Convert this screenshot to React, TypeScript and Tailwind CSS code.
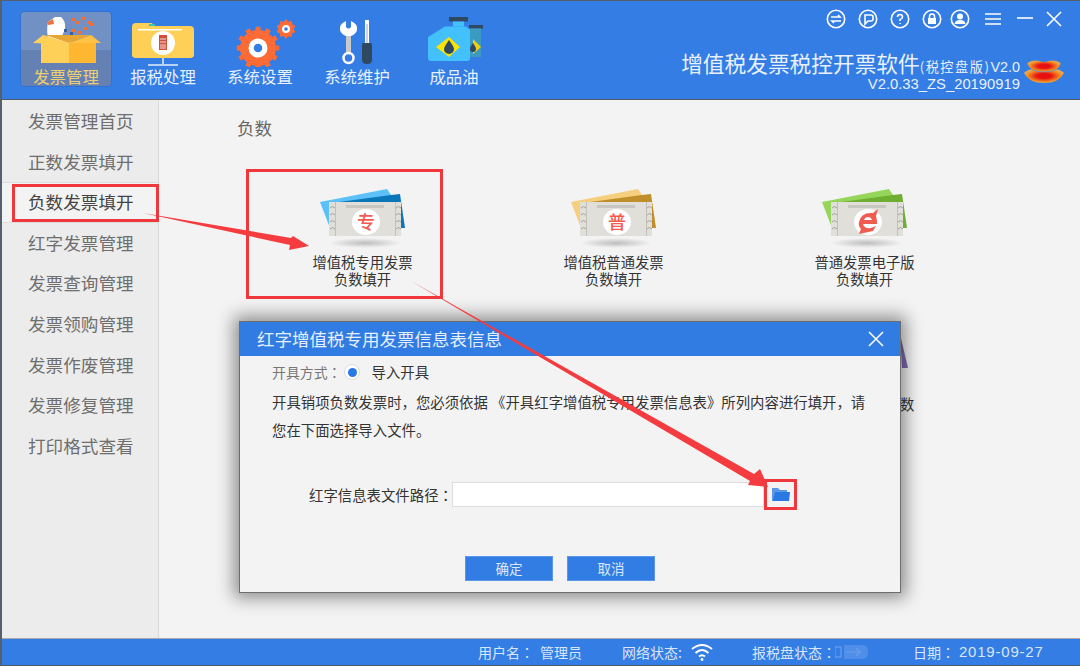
import React from "react";

const cjk = { fontFamily: '"Noto Sans CJK SC", "Liberation Sans", sans-serif' };
const latin = { fontFamily: '"Liberation Sans", sans-serif' };
const Colon = () => <span style={{ fontFamily: '"Noto Sans CJK TC", sans-serif' }}>：</span>;

function BoxIcon() {
  return (
    <svg width="72" height="50" viewBox="0 0 72 50" className="translate-x-[3px]">
      <path d="M15 5 L22 0 H28 Q33 4 32 12 L29 19 H38 L38 26 H16 Q13 14 15 5Z" fill="#fff" />
      <path d="M15 5 L20 2 L21 7 L15 8Z" fill="#f0703c" />
      <g fill="#f0703c">
        <rect x="39" y="1" width="4" height="3" /><rect x="48" y="0" width="4" height="3" />
        <rect x="43" y="4" width="4" height="3" /><rect x="54" y="4" width="4" height="3" />
        <rect x="39" y="12" width="3" height="3" /><rect x="50" y="10" width="4" height="3" />
        <rect x="56" y="6" width="4" height="3" /><rect x="44" y="14" width="4" height="3" />
      </g>
      <g fill="#3d5f95"><rect x="31" y="12" width="3" height="3" /><rect x="37" y="15" width="3" height="3" /></g>
      <path d="M8 26 H36 V46 H8Z" fill="#ffd058" />
      <path d="M36 26 H63 V46 H36Z" fill="#ffb732" />
      <path d="M0 26 L10 18 L36 26 L26 27 Z" fill="#ffd058" />
      <path d="M36 26 L58 18 L68 26 Z" fill="#ffc244" />
      <path d="M12 18 H58 L36 26Z" fill="#e7a634" />
    </svg>
  );
}

function FolderIcon() {
  return (
    <svg width="66" height="46" viewBox="0 0 66 46">
      <path d="M2 6 Q2 2 6 2 H22 L24 5 H60 Q64 5 64 9 V34 Q64 37 60 37 H6 Q2 37 2 34Z" fill="#ffd058" />
      <rect x="8" y="8" width="44" height="1.5" fill="#fff" />
      <rect x="19" y="3" width="6" height="2" fill="#3bc4b4" />
      <ellipse cx="33" cy="22" rx="12" ry="12" fill="#fff" />
      <rect x="29" y="14" width="8" height="15" fill="#d0503c" />
      <g stroke="#fff" strokeWidth="0.8"><path d="M30 18 H36 M30 21 H36 M31 23 V28 M33 23 V28 M35 23 V28" /></g>
      <path d="M33 37 V43 M18 44 H48" stroke="#e6eefb" strokeWidth="1.5" />
    </svg>
  );
}

function Gear({ cx, cy, r, teeth, hole }: { cx: number; cy: number; r: number; teeth: number; hole: number }) {
  const items = Array.from({ length: teeth }, (_, i) => (i * 360) / teeth);
  return (
    <g>
      {items.map((a) => (
        <rect key={a} x={cx - r * 0.14} y={cy - r * 1.18} width={r * 0.28} height={r * 0.4} fill="#fc6a35" transform={`rotate(${a} ${cx} ${cy})`} />
      ))}
      <circle cx={cx} cy={cy} r={r} fill="#fc6a35" />
      <circle cx={cx} cy={cy} r={hole} fill="#fff" />
      <circle cx={cx} cy={cy} r={hole * 0.45} fill="#337de5" />
    </g>
  );
}

function GearIcon() {
  return (
    <svg width="62" height="48" viewBox="0 0 62 48" className="translate-x-[7px]">
      <Gear cx={22} cy={29} r={18} teeth={12} hole={9.5} />
      <Gear cx={50} cy={10} r={8} teeth={10} hole={4} />
    </svg>
  );
}

function ToolIcon() {
  return (
    <svg width="46" height="48" viewBox="0 0 46 48" className="translate-x-[3px]">
      <path d="M9 2 Q2 5 3 11 Q4 15 9 17 V33 H14 V17 Q19 15 20 11 Q21 5 14 2 V8 Q11.5 11 9 8Z" fill="#fff" />
      <rect x="9" y="17" width="5" height="17" fill="#c9c9c9" />
      <circle cx="11.5" cy="39" r="5" fill="none" stroke="#fff" strokeWidth="2.5" />
      <rect x="28" y="1" width="4" height="24" fill="#fff" />
      <rect x="29.2" y="5" width="1.6" height="20" fill="#c9c9c9" />
      <path d="M26 24 H34 Q35 24 35 26 V41 Q35 45 30 45 Q25 45 25 41 V26 Q25 24 26 24Z" fill="#2e4960" />
    </svg>
  );
}

function OilIcon() {
  return (
    <svg width="60" height="50" viewBox="0 0 60 50" className="translate-x-[3px] -translate-y-[1px]">
      <rect x="42" y="9" width="14" height="3.5" fill="#2e4960" />
      <path d="M42 12.5 H54 V41 H40Z" fill="#3a9ac0" />
      <path d="M46 23 L54 31 L46 38Z" fill="#f0cf10" />
      <path d="M46 27 Q43 31 43 33 A3 3 0 0 0 49 33 Q49 31 46 27Z" fill="#2e4960" />
      <rect x="22" y="1" width="19" height="4.5" fill="#2e4960" />
      <rect x="26" y="5.5" width="11" height="5" fill="#42c1fc" />
      <path d="M18 10.5 H39 L43 14 V42 Q43 45 40 45 H4 Q1 45 1 42 V21 Z" fill="#42c1fc" />
      <path d="M22 21 L33 31 L22 41 L9 31Z" fill="#fde302" />
      <path d="M22 24 Q17 31 17 33 A5 5 0 0 0 27 33 Q27 31 22 24Z" fill="#2e4960" />
    </svg>
  );
}

const navs = [
  { label: "发票管理", icon: <BoxIcon />, active: true },
  { label: "报税处理", icon: <FolderIcon /> },
  { label: "系统设置", icon: <GearIcon /> },
  { label: "系统维护", icon: <ToolIcon /> },
  { label: "成品油", icon: <OilIcon /> },
];

function Ticket({ light, dark, glyph, logo }: { light: string; dark: string; glyph?: string; logo?: boolean }) {
  const holes = [7, 14, 21, 28];
  return (
    <svg width="90" height="62" viewBox="0 0 90 62" className="translate-x-[1px]">
      <path d="M1 14 L68 1 L72 7 L72 40 L11 40Z" fill={light} />
      <path d="M20 14 L72 7 L81 6 L86 40 L60 40Z" fill={dark} />
      <rect x="10" y="14" width="72" height="34" fill="#e1dfd9" />
      <rect x="16" y="14" width="1" height="34" fill="#c2c0ba" />
      <rect x="76" y="14" width="1" height="34" fill="#c2c0ba" />
      {holes.map((y) => (
        <g key={y} fill="none" stroke="#9a9a94" strokeWidth="0.9">
          <path d={`M11 ${y + 13} q2.5 -3 5 0`} />
          <path d={`M77 ${y + 13} q2.5 -3 5 0`} />
        </g>
      ))}
      <rect x="27" y="17" width="38" height="3" fill="#c9c7c1" />
      <ellipse cx="47" cy="34" rx="14" ry="13" fill="#fff" />
      {glyph && (
        <text x="47" y="40.5" textAnchor="middle" fontSize="18" fontWeight="500" fill="#f25c50" style={cjk}>{glyph}</text>
      )}
      {logo && (
        <path d="M38 34 Q40 24 52 25 L57 21 L55 28 Q56 31 56 36 H42 Q43 41 50 40 L55 38 L52 43 L38 46 L40 41 Q37 38 38 34Z M43 32 H51 Q50 29 47 29 Q44 29 43 32Z" fill="#f25c50" fillRule="evenodd" />
      )}
      <defs>
        <radialGradient id="sh">
          <stop offset="0" stopColor="#bdbdbd" />
          <stop offset="1" stopColor="#f3f3f3" />
        </radialGradient>
      </defs>
      <ellipse cx="46" cy="55" rx="36" ry="5" fill="url(#sh)" />
    </svg>
  );
}

function Item({ line1, line2, icon }: { line1: string; line2: string; icon: React.ReactNode }) {
  return (
    <div className="flex flex-col items-center">
      <div className="h-[62px]">{icon}</div>
      <div className="mt-[3px] text-[14.3px] leading-[17px] text-[#333] text-center whitespace-nowrap">
        <div>{line1}</div>
        <div>{line2}</div>
      </div>
    </div>
  );
}

function CircleIcon({ children }: { children: React.ReactNode }) {
  return (
    <svg width="20" height="20" viewBox="0 0 20 20" fill="none" stroke="#fff" strokeWidth="1.6">
      <circle cx="10" cy="10" r="8.7" />
      {children}
    </svg>
  );
}

const side = ["发票管理首页", "正数发票填开", "负数发票填开", "红字发票管理", "发票查询管理", "发票领购管理", "发票作废管理", "发票修复管理", "打印格式查看"];

export default function App() {
  return (
    <div className="relative w-[1080px] h-[666px] overflow-hidden flex flex-col bg-[#f3f3f3] border-l-2 border-t border-[#55606e]" style={cjk}>
      {/* Header */}
      <header className="h-[99px] bg-[#337de5] flex shrink-0 border-b border-[#4e5a68]">
        <nav className="flex pl-[18px] pt-[10px] h-fit">
          {navs.map((n) => (
            <div
              key={n.label}
              className={`w-[92px] h-[76px] mr-[5px] rounded-[4px] flex flex-col items-center ${n.active ? "border border-[#2f72d4] bg-[linear-gradient(#7191c4_0,#7191c4_52%,#6581b3_52%,#6581b3_100%)]" : "border border-transparent"}`}
            >
              <div className="h-[50px] flex items-end justify-center mt-[5px]">{n.icon}</div>
              <div className={`text-[16.4px] leading-[20px] -mt-[1px] whitespace-nowrap ${n.active ? "text-[#eccf6f]" : "text-[#e8f0fc]"}`}>{n.label}</div>
            </div>
          ))}
        </nav>
        <div className="flex-1 flex flex-col items-end pr-[14px]">
          <div className="flex items-center gap-[12px] h-[34px] mt-[1px]">
            <CircleIcon><path d="M5 8 H14 L12 6 M15 12 H6 L8 14" /></CircleIcon>
            <CircleIcon><path d="M7 15 V6 H13 Q15 6 15 8 V10 Q15 12 13 12 H10 L7 15Z" /></CircleIcon>
            <CircleIcon><path d="M7.5 8 Q7.5 5.5 10 5.5 Q12.5 5.5 12.5 8 Q12.5 9.5 10 10.5 V12 M10 14 V15" /></CircleIcon>
            <CircleIcon><rect x="6" y="9" width="8" height="6" fill="#fff" stroke="none" /><path d="M7.5 9 V7.5 A2.5 2.5 0 0 1 12.5 7.5 V9" /></CircleIcon>
            <div className="-ml-[4px] flex">
              <CircleIcon><circle cx="10" cy="7.5" r="3" fill="#fff" stroke="none" /><path d="M4.5 15 Q5 11 10 11 Q15 11 15.5 15Z" fill="#fff" stroke="none" /></CircleIcon>
            </div>
            <svg width="18" height="14" viewBox="0 0 18 14" stroke="#fff" strokeWidth="1.6" className="ml-[2px]"><path d="M1 2 H17 M1 7 H17 M1 12 H17" /></svg>
            <svg width="18" height="14" viewBox="0 0 18 14" stroke="#fff" strokeWidth="1.6" className="ml-[2px]"><path d="M1 6 H17" /></svg>
            <svg width="16" height="16" viewBox="0 0 16 16" stroke="#fff" strokeWidth="1.6" className="mr-[4px]"><path d="M1 1 L15 15 M15 1 L1 15" /></svg>
          </div>
          <div className="flex items-center mt-[12px] mr-[1px]">
            <div className="flex flex-col items-end text-[#e8f0fc]">
              <div className="flex items-baseline whitespace-nowrap leading-[28px] translate-y-[1px]">
                <span className="text-[21.7px]">增值税发票税控开票软件</span>
                <span className="text-[13.2px] tracking-[1.5px]">(税控盘版)</span>
                <span className="text-[14.4px]" style={latin}>V2.0</span>
              </div>
              <div className="text-[14.8px] leading-[18px] -mt-[5px]" style={latin}>V2.0.33_ZS_20190919</div>
            </div>
            <svg width="42" height="26" viewBox="0 0 42 26" className="ml-[3px]">
              <defs>
                <radialGradient id="lg">
                  <stop offset="0.35" stopColor="#e81010" />
                  <stop offset="0.8" stopColor="#f58a20" />
                  <stop offset="1" stopColor="#e8a850" />
                </radialGradient>
              </defs>
              <path d="M1 15 Q8 8 21 13 Q34 8 41 15 Q36 25 21 25 Q6 25 1 15Z" fill="url(#lg)" />
              <path d="M4 5 Q10 0 21 4 Q32 0 38 5 Q36 14 21 14 Q6 14 4 5Z" fill="url(#lg)" stroke="#337de5" strokeWidth="0.6" />
            </svg>
          </div>
        </div>
      </header>

      {/* Body */}
      <div className="flex-1 flex min-h-0">
        <aside className="w-[157px] shrink-0 bg-[#ececec] border-r border-[#d8d8d8] pt-[1px]">
          {side.map((s, i) => (
            <div key={s} className={`h-[40.6px] pl-[26px] flex items-center text-[17.6px] whitespace-nowrap ${i === 2 ? "bg-[#f3f3f3] text-[#444] border-y border-[#dedede]" : "text-[#6e6e6e]"}`}>
              {s}
            </div>
          ))}
        </aside>
        <main className="flex-1 pl-[78px] pt-[18px] relative">
          <div className="text-[17.5px] leading-[20px] text-[#666]">负数</div>
          <div className="grid grid-cols-[251px_251px_251px] mt-[50px]">
            <Item line1="增值税专用发票" line2="负数填开" icon={<Ticket light="#5cc1f8" dark="#0b77b8" glyph="专" />} />
            <Item line1="增值税普通发票" line2="负数填开" icon={<Ticket light="#f5cf7e" dark="#c08f2c" glyph="普" />} />
            <Item line1="普通发票电子版" line2="负数填开" icon={<Ticket light="#95d65a" dark="#6fae32" logo />} />
          </div>
          <div className="absolute left-[741px] top-[295px] text-[14.3px] text-[#333] leading-[18px]">数</div>
          <svg className="absolute left-[705px] top-[234px]" width="50" height="40" viewBox="0 0 50 40"><path d="M36 0 L44 34 L38 34Z" fill="#7d6bb0" /></svg>
        </main>
      </div>

      {/* Status bar */}
      <footer className="h-[28px] shrink-0 bg-[#337de5] border-t border-[#a8a8a8] border-b border-b-[#4e5a68] flex items-center text-[14px] text-[#d9e6fa] whitespace-nowrap">
        <span className="ml-[476px]">用户名<Colon /></span>
        <span className="ml-[6px]">管理员</span>
        <span className="ml-[40px]">网络状态:</span>
        <svg width="24" height="20" viewBox="0 0 24 20" fill="none" stroke="#fff" strokeWidth="2" className="ml-[8px]">
          <path d="M2 7 Q12 -1 22 7 M5.5 11 Q12 5 18.5 11 M9 14.5 Q12 12 15 14.5" />
          <circle cx="12" cy="17.5" r="1.4" fill="#fff" stroke="none" />
        </svg>
        <span className="ml-[38px]">报税盘状态<Colon /></span>
        <svg width="34" height="16" viewBox="0 0 34 16" className="-ml-[1px]">
          <rect x="0" y="3" width="6" height="10" fill="none" stroke="#6b9eea" strokeWidth="1.2" />
          <path d="M9 1 H28 Q33 1 33 8 Q33 15 28 15 H9Z" fill="#4f8fe9" />
          <path d="M11 8 H26 M21 4 L25 8 L21 12" stroke="#6b9eea" fill="none" strokeWidth="1.2" />
        </svg>
        <span className="ml-[44px]">日期<Colon /></span>
        <span className="ml-[4px] tracking-[0.8px] text-[15px]" style={latin}>2019-09-27</span>
      </footer>

      {/* Dialog */}
      <div className="absolute left-[237px] top-[320px] w-[662px] h-[272px] bg-[#f3f3f3] border border-[#6d6d6d] shadow-[0_0_16px_5px_rgba(0,0,0,0.42)] flex flex-col">
        <div className="h-[34px] bg-[#317ce3] flex items-center justify-between pl-[17px] pr-[16px] shrink-0">
          <span className="text-[17.5px] text-[#e6effc] whitespace-nowrap">红字增值税专用发票信息表信息</span>
          <svg width="16" height="16" viewBox="0 0 16 16" stroke="#fff" strokeWidth="1.5"><path d="M1 1 L15 15 M15 1 L1 15" /></svg>
        </div>
        <div className="flex-1 pl-[32px] text-[14.4px] text-[#333] flex flex-col">
          <div className="flex items-center h-[20px] mt-[6px]">
            <span className="text-[#777] whitespace-nowrap text-[13.9px]">开具方式<Colon /></span>
            <span className="ml-[3px] w-[16px] h-[16px] rounded-full bg-white border border-[#ddd] flex items-center justify-center">
              <span className="w-[9px] h-[9px] rounded-full bg-[#2a78e4]" />
            </span>
            <span className="ml-[11px] whitespace-nowrap">导入开具</span>
          </div>
          <p className="mt-[6px] leading-[28px] w-[596px]">
            开具销项负数发票时，您必须依据 《开具红字增值税专用发票信息表》所列内容进行填开，请您在下面选择导入文件。
          </p>
          <div className="flex items-center mt-[38px] h-[25px]">
            <span className="ml-[37px] whitespace-nowrap w-[143px]">红字信息表文件路径<Colon /></span>
            <div className="w-[312px] h-[25px] bg-white border border-[#ddd]" />
            <svg width="20" height="15" viewBox="0 0 20 15" className="ml-[7px]">
              <path d="M1 1 H7 L9 3 H16 V5 H5 L3 14 H1Z" fill="#5b98e8" />
              <path d="M4 5 H19 L18 14 H2Z" fill="#2a78e4" />
            </svg>
          </div>
          <div className="flex gap-[14px] mt-[49px] ml-[193px]">
            <button className="w-[88px] h-[25px] bg-[#327de3] border border-[#5a97ea] text-[#dce8fb] text-[13.5px]">确定</button>
            <button className="w-[88px] h-[25px] bg-[#327de3] border border-[#5a97ea] text-[#dce8fb] text-[13.5px]">取消</button>
          </div>
        </div>
      </div>

      {/* Annotations */}
      <div className="absolute left-[10px] top-[183px] w-[147px] h-[38px] border-[3px] border-[#f0383c]" />
      <div className="absolute left-[244px] top-[168px] w-[197px] h-[130px] border-[3px] border-[#f0383c]" />
      <div className="absolute left-[762px] top-[478px] w-[33px] h-[31px] border-[3px] border-[#f0383c]" />
      <svg className="absolute -left-[2px] -top-[1px] pointer-events-none" width="1080" height="666" viewBox="0 0 1080 666">
        <polygon points="143,213 291,238 293,236 309,246 289,250 290,245" fill="#f43c40" />
        <polygon points="411,281 754,474 760,469 768,487 748,485 750,481" fill="#f43c40" />
      </svg>
    </div>
  );
}
